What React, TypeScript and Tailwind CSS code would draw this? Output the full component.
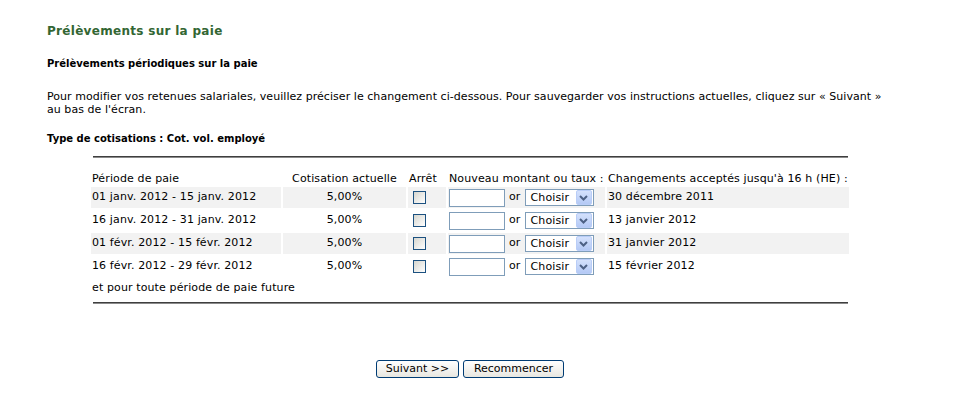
import React from 'react'

const rows = [
  { period: '01 janv. 2012 - 15 janv. 2012', rate: '5,00%', deadline: '30 décembre 2011', shaded: true },
  { period: '16 janv. 2012 - 31 janv. 2012', rate: '5,00%', deadline: '13 janvier 2012', shaded: false },
  { period: '01 févr. 2012 - 15 févr. 2012', rate: '5,00%', deadline: '31 janvier 2012', shaded: true },
  { period: '16 févr. 2012 - 29 févr. 2012', rate: '5,00%', deadline: '15 février 2012', shaded: false },
]

function Checkbox() {
  return (
    <span className="ml-[4px] block w-[13px] h-[13px] border border-[#1c5180] bg-linear-to-br from-[#d6d6cf] to-white" />
  )
}

function ChoiceSelect() {
  return (
    <span className="flex items-center w-[69px] h-[17px] border border-[#7f9db9] bg-white">
      <span className="flex-1 pl-[5px] leading-[15px]">Choisir</span>
      <span className="flex items-center justify-center w-[16px] h-[15px] mr-[1px] border border-[#b9cdf7] bg-linear-to-b from-[#d4e1fc] to-[#b4c9f5] rounded-[2px]">
        <svg width="9" height="6" viewBox="0 0 9 6">
          <path d="M1 1 L4.5 4.5 L8 1" fill="none" stroke="#4d6185" strokeWidth="2" />
        </svg>
      </span>
    </span>
  )
}

function Rule() {
  return <div className="mx-auto w-[755px] border-t border-t-[#3f3f3f] border-b border-b-[#8a8a8a]" />
}

export default function App() {
  return (
    <div className="min-h-[393px] bg-white text-black text-[11px] font-['Verdana','DejaVu_Sans',sans-serif]">
      <div className="w-[846px] ml-[47px] pt-[24px]">
        <h1 className="text-[12px] leading-[14px] font-bold text-[#336633] tracking-[0.3px]">
          Prélèvements sur la paie
        </h1>

        <h2 className="mt-[20px] text-[10px] leading-[12px] font-bold">
          Prélèvements périodiques sur la paie
        </h2>

        <p className="mt-[20px] leading-[13px] tracking-[0.05px]">
          Pour modifier vos retenues salariales, veuillez préciser le changement ci-dessous. Pour sauvegarder vos instructions actuelles, cliquez sur « Suivant »
          <br />
          au bas de l'écran.
        </p>

        <p className="mt-[17px] text-[10px] leading-[12px] font-bold">
          Type de cotisations : Cot. vol. employé
        </p>

        <div className="mt-[11px]">
          <Rule />
        </div>

        <table className="mx-auto mt-[3px] border-separate border-spacing-[2px] tracking-[0.12px]">
          <colgroup>
            <col className="w-[190px]" />
            <col className="w-[123px]" />
            <col className="w-[38px]" />
            <col className="w-[157px]" />
            <col className="w-[242px]" />
          </colgroup>
          <thead>
            <tr className="h-[22px] font-normal">
              <th className="p-0 pl-[1px] align-bottom text-left font-normal leading-[13px]">Période de paie</th>
              <th className="p-0 align-bottom text-center font-normal leading-[13px]">Cotisation actuelle</th>
              <th className="p-0 pl-[1px] align-bottom text-left font-normal leading-[13px]">Arrêt</th>
              <th className="p-0 pl-[1px] align-bottom text-left font-normal leading-[13px] whitespace-nowrap">Nouveau montant ou taux :</th>
              <th className="p-0 pl-[1px] align-bottom text-left font-normal leading-[13px] whitespace-nowrap">Changements acceptés jusqu'à 16 h (HE) :</th>
            </tr>
          </thead>
          <tbody>
            {rows.map(r => (
              <tr key={r.period} className="h-[21px]">
                <td className={`p-0 pl-[1px] whitespace-nowrap ${r.shaded ? 'bg-[#f2f2f2]' : ''}`}>{r.period}</td>
                <td className={`p-0 text-center ${r.shaded ? 'bg-[#f2f2f2]' : ''}`}>{r.rate}</td>
                <td className={`p-0 pl-[1px] ${r.shaded ? 'bg-[#f2f2f2]' : ''}`}>
                  <Checkbox />
                </td>
                <td className={`p-0 pl-[1px] ${r.shaded ? 'bg-[#f2f2f2]' : ''}`}>
                  <div className="flex items-center">
                    <span className="block w-[56px] h-[18px] border border-[#7f9db9] bg-white" />
                    <span className="ml-[4px] mr-[4px]">or</span>
                    <ChoiceSelect />
                  </div>
                </td>
                <td className={`p-0 pl-[1px] ${r.shaded ? 'bg-[#f2f2f2]' : ''}`}>{r.deadline}</td>
              </tr>
            ))}
            <tr className="h-[16px]">
              <td colSpan={5} className="p-0 pl-[1px] leading-[13px]">et pour toute période de paie future</td>
            </tr>
          </tbody>
        </table>

        <div className="mt-[5px]">
          <Rule />
        </div>

        <div className="mt-[56px] flex justify-center gap-[4px]">
          <button className="w-[83px] h-[18px] leading-[16px] border border-[#003c74] rounded-[3px] bg-linear-to-b from-white to-[#e8e7e0]">
            Suivant &gt;&gt;
          </button>
          <button className="w-[101px] h-[18px] leading-[16px] border border-[#003c74] rounded-[3px] bg-linear-to-b from-white to-[#e8e7e0]">
            Recommencer
          </button>
        </div>
      </div>
    </div>
  )
}
